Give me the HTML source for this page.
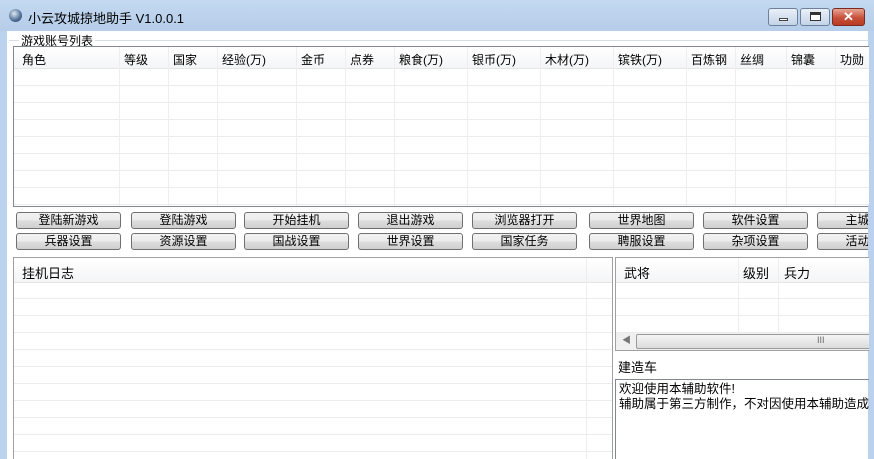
<!DOCTYPE html><html><head><meta charset="utf-8"><style>
*{margin:0;padding:0;box-sizing:border-box}
html,body{width:874px;height:459px;overflow:hidden}
body{background:#fff;font-family:"Liberation Sans","Noto Sans CJK SC",sans-serif;font-size:12px;color:#000;position:relative}
.abs{position:absolute}
.title{left:0;top:0;width:874px;height:31px;background:linear-gradient(#c4d9f1,#b5cde9)}
.lb{left:0;top:31px;width:7px;height:428px;background:#bad2ee}
.rb{left:868px;top:31px;width:6px;height:428px;background:#bad2ee}
.tb{border:1px solid #828790;background:#fff;overflow:hidden}
.hd{position:absolute;left:0;top:0;height:22px;background:linear-gradient(#fff,#f4f5f7);border-bottom:1px solid #e5e5e5;width:100%}
.hd span{position:absolute;top:4px}
.vl{position:absolute;top:0;bottom:0;width:1px;background:#eee}
.rows{position:absolute;left:0;right:0;top:22px;bottom:0;background:repeating-linear-gradient(to bottom,transparent 0 16px,#ececec 16px 17px)}
.btn{position:absolute;width:105px;height:17px;border:1px solid #707070;border-radius:3px;background:linear-gradient(#f2f2f2 0%,#ebebeb 50%,#dddddd 51%,#cfcfcf 100%);text-align:center;font-size:12px;line-height:15px}
.wb{position:absolute;top:8px;height:18px;border:1px solid #6d7f9a;border-radius:3px;background:linear-gradient(#e9f0f8,#c4d4e8)}
</style></head><body>
<div class="abs title"></div>
<div class="abs" style="left:9px;top:9px;width:13px;height:13px;border-radius:50%;background:radial-gradient(circle at 40% 35%,#dfe8f2,#4d6d93 60%,#2a3d55)"></div>
<div class="abs" style="left:28px;top:8px;font-size:13px">小云攻城掠地助手 V1.0.0.1</div>
<div class="wb" style="left:768px;width:30px"><div class="abs" style="left:10px;top:9px;width:9px;height:3px;background:#fff;border:1px solid #444"></div></div>
<div class="wb" style="left:800px;width:30px"><div class="abs" style="left:9px;top:3px;width:11px;height:9px;border:1px solid #333;border-top-width:3px;background:#fff"></div></div>
<div class="wb" style="left:832px;width:33px;border-color:#7a2a20;background:linear-gradient(#e8a593,#c7503a 55%,#b93a22);color:#fff;text-align:center;font-weight:bold;font-size:13px;line-height:15px">✕</div>
<div class="abs lb"></div><div class="abs rb"></div>
<div class="abs" style="left:7px;top:31px;width:861px;height:428px;background:#fff"></div>
<div class="abs" style="left:9px;top:40px;width:859px;height:1px;background:#d5dfe5"></div>
<div class="abs" style="left:19px;top:32px;background:#fff;padding:0 2px">游戏账号列表</div>
<div class="abs tb" style="left:13px;top:46px;width:856px;height:161px;border-right:none">
<div class="rows"></div>
<div class="hd"><span style="left:8px">角色</span><span style="left:110px">等级</span><span style="left:159px">国家</span><span style="left:208px">经验(万)</span><span style="left:287px">金币</span><span style="left:336px">点券</span><span style="left:385px">粮食(万)</span><span style="left:458px">银币(万)</span><span style="left:531px">木材(万)</span><span style="left:604px">镔铁(万)</span><span style="left:677px">百炼钢</span><span style="left:726px">丝绸</span><span style="left:777px">锦囊</span><span style="left:826px">功勋</span></div>
<div class="vl" style="left:105px"></div><div class="vl" style="left:154px"></div><div class="vl" style="left:203px"></div><div class="vl" style="left:282px"></div><div class="vl" style="left:331px"></div><div class="vl" style="left:380px"></div><div class="vl" style="left:453px"></div><div class="vl" style="left:526px"></div><div class="vl" style="left:599px"></div><div class="vl" style="left:672px"></div><div class="vl" style="left:721px"></div><div class="vl" style="left:772px"></div><div class="vl" style="left:821px"></div>
</div>
<div class="btn" style="left:16px;top:212px">登陆新游戏</div>
<div class="btn" style="left:131px;top:212px">登陆游戏</div>
<div class="btn" style="left:244px;top:212px">开始挂机</div>
<div class="btn" style="left:358px;top:212px">退出游戏</div>
<div class="btn" style="left:472px;top:212px">浏览器打开</div>
<div class="btn" style="left:589px;top:212px">世界地图</div>
<div class="btn" style="left:703px;top:212px">软件设置</div>
<div class="btn" style="left:817px;top:212px">主城信息</div>
<div class="btn" style="left:16px;top:233px">兵器设置</div>
<div class="btn" style="left:131px;top:233px">资源设置</div>
<div class="btn" style="left:244px;top:233px">国战设置</div>
<div class="btn" style="left:358px;top:233px">世界设置</div>
<div class="btn" style="left:472px;top:233px">国家任务</div>
<div class="btn" style="left:589px;top:233px">聘服设置</div>
<div class="btn" style="left:703px;top:233px">杂项设置</div>
<div class="btn" style="left:817px;top:233px">活动设置</div>
<div class="abs" style="left:868px;top:205px;width:6px;height:254px;background:#bad2ee"></div>
<div class="abs tb" style="left:13px;top:257px;width:600px;height:206px;border-color:#a0a0a0">
<div class="rows" style="top:24px"></div>
<div class="hd" style="height:25px"><span style="left:8px;top:5px;font-size:13px">挂机日志</span></div>
<div class="vl" style="left:572px"></div>
</div>
<div class="abs tb" style="left:615px;top:257px;width:254px;height:94px;border-color:#a0a0a0;border-right:none">
<div class="rows" style="top:24px"></div>
<div class="hd" style="height:25px"><span style="left:8px;top:5px;font-size:13px">武将</span><span style="left:127px;top:5px;font-size:13px">级别</span><span style="left:168px;top:5px;font-size:13px">兵力</span></div>
<div class="vl" style="left:122px"></div><div class="vl" style="left:162px"></div>
<div class="abs" style="left:0;top:75px;width:254px;height:17px;background:#f0f0f0"><span class="abs" style="left:6px;top:0;font-size:9px;color:#777">◀</span><div class="abs" style="left:20px;top:1px;width:240px;height:15px;border:1px solid #9a9a9a;border-radius:2px;background:linear-gradient(#f4f4f4,#dcdcdc)"><span class="abs" style="left:180px;top:0;font-size:9px;color:#666">III</span></div></div>
</div>
<div class="abs" style="left:618px;top:357px;font-size:13px">建造车</div>
<div class="abs" style="left:615px;top:379px;width:254px;height:84px;border:1px solid #828790;border-right:none;padding:2px 3px;font-size:12.5px;line-height:15px;white-space:nowrap;overflow:hidden">欢迎使用本辅助软件!<br>辅助属于第三方制作，不对因使用本辅助造成的</div>
</body></html>
